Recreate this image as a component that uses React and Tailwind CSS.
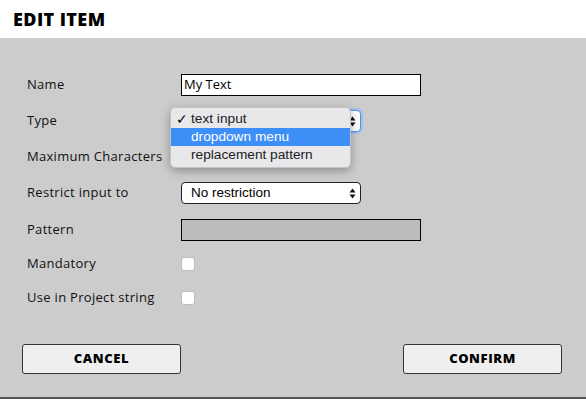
import React from "react";

const labelFont = { fontFamily: '"Open Sans", "Liberation Sans", sans-serif' };

function Arrows() {
  return (
    <svg width="7" height="11" viewBox="0 0 7 11" className="shrink-0">
      <path d="M3.5 0.5 L6.5 4.5 L0.5 4.5 Z" fill="#111" />
      <path d="M3.5 10.5 L6.5 6.5 L0.5 6.5 Z" fill="#111" />
    </svg>
  );
}

function Row({ label, children, className = "" }) {
  return (
    <div className={"flex items-center h-[22px] " + className}>
      <div className="w-[154px] shrink-0 text-[13px] text-[#111] tracking-[0.3px]" style={labelFont}>
        {label}
      </div>
      {children}
    </div>
  );
}

function Check() {
  return <div className="w-[14px] h-[14px] shrink-0 rounded-[3px] bg-white border border-[#bdbdbd]" />;
}

export default function App() {
  return (
    <div className="w-[586px] h-[399px] flex flex-col bg-[#cccccc] overflow-hidden">
      <div className="h-[38px] shrink-0 bg-white flex items-center pl-[13px] pt-[1px]">
        <span
          className="text-[18px] font-extrabold text-black tracking-[0.4px]"
          style={{ fontFamily: '"Open Sans", "Liberation Sans", sans-serif' }}
        >
          EDIT ITEM
        </span>
      </div>
      <div className="flex-1 flex flex-col pl-[27px] pt-[36px]">
        <Row label="Name">
          <div className="w-[240px] h-[22px] border border-black bg-white flex items-center px-[2px] text-[13px] text-black" style={labelFont}>
            My Text
          </div>
        </Row>
        <Row label="Type" className="mt-[14px]">
          <div className="relative w-[180px] h-[22px]">
            <div className="w-full h-full rounded-[4px] border border-[#5b8fd6] ring-2 ring-[#9fc2ef] bg-white flex items-center justify-end pr-[4px]">
              <Arrows />
            </div>
            <div
              className="absolute left-[-11px] top-[-3px] w-[181px] h-[61px] rounded-[5px] bg-[#e8e8ea] shadow-[0_3px_10px_rgba(0,0,0,0.3)] border border-[#c4c4c4] flex flex-col py-[2px] text-[13.7px] text-[#222]"
              style={{ fontFamily: '"Liberation Sans", Arial, sans-serif' }}
            >
              <div className="h-[18px] flex items-center">
                <span className="w-[20px] pl-[5px] text-[14px] text-black">✓</span>
                <span>text input</span>
              </div>
              <div className="h-[18px] flex items-center bg-[#3e8ef7] text-white">
                <span className="w-[20px]" />
                <span>dropdown menu</span>
              </div>
              <div className="h-[18px] flex items-center">
                <span className="w-[20px]" />
                <span>replacement pattern</span>
              </div>
            </div>
          </div>
        </Row>
        <Row label="Maximum Characters" className="mt-[14px]" />
        <Row label="Restrict input to" className="mt-[14px]">
          <div className="w-[180px] h-[22px] rounded-[4px] border border-[#222] bg-white flex items-center justify-between pl-[9px] pr-[4px] text-[13.5px] text-black" style={{ fontFamily: '"Liberation Sans", Arial, sans-serif' }}>
            <span>No restriction</span>
            <Arrows />
          </div>
        </Row>
        <Row label="Pattern" className="mt-[15px]">
          <div className="w-[240px] h-[22px] border border-black bg-[#bbbbbb]" />
        </Row>
        <Row label="Mandatory" className="mt-[12px]">
          <Check />
        </Row>
        <Row label="Use in Project string" className="mt-[12px]">
          <Check />
        </Row>
        <div className="flex justify-between mt-[35px] pr-[24px] ml-[-5px]">
          <button
            className="w-[159px] h-[30px] rounded-[3px] border border-[#333] bg-[#efefef] text-[13px] font-extrabold text-black tracking-[0.6px]"
            style={labelFont}
          >
            CANCEL
          </button>
          <button
            className="w-[159px] h-[30px] rounded-[3px] border border-[#333] bg-[#efefef] text-[13px] font-extrabold text-black tracking-[0.6px]"
            style={labelFont}
          >
            CONFIRM
          </button>
        </div>
      </div>
      <div className="h-[2px] shrink-0 bg-[#555555]" />
    </div>
  );
}
